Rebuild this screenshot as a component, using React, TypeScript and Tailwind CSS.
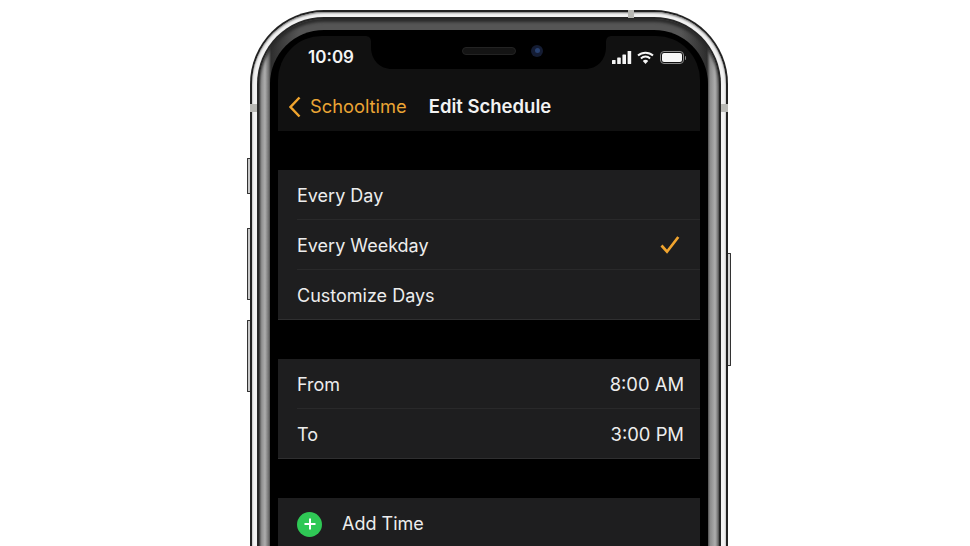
function Row({ label, value, check, last }: { label: string; value?: string; check?: boolean; last?: boolean }) {
  return (
    <div className="pl-[19px]">
      <div className={`flex items-center justify-between pr-[16px] pt-[1px] ${last ? "h-[49px]" : "h-[50px] border-b border-[#29292a]"}`}>
        <span className="text-[18px] leading-[27px] text-[#ededed]">{label}</span>
        {value && <span className="text-[18.4px] leading-[28px] text-[#ededed]">{value}</span>}
        {check && (
          <svg width="20" height="18" viewBox="0 0 20 18" fill="none" className="mr-[4px]">
            <path d="M1.5 9.5l5.5 6.2L18.3 1" stroke="#f0a42e" strokeWidth="2.7" />
          </svg>
        )}
      </div>
    </div>
  )
}

function StatusIcons() {
  return (
    <div className="flex items-center gap-[5px]">
      <svg width="20" height="13" viewBox="0 0 20 13" fill="#f5f5f5">
        <rect x="0" y="9" width="3.6" height="4" rx="0.6" />
        <rect x="5.2" y="6.4" width="3.6" height="6.6" rx="0.6" />
        <rect x="10.4" y="3.4" width="3.6" height="9.6" rx="0.6" />
        <rect x="15.6" y="0" width="3.6" height="13" rx="0.6" />
      </svg>
      <svg width="17" height="13" viewBox="0 0 17 13" fill="none" stroke="#f5f5f5" strokeWidth="2">
        <path d="M1 4.6C5.2.7 11.8.7 16 4.6" />
        <path d="M3.9 7.4C6.5 5 10.5 5 13.1 7.4" />
        <path d="M8.5 13l2.7-3.1a3.7 3.7 0 0 0-5.4 0z" fill="#f5f5f5" stroke="none" />
      </svg>
      <div className="ml-[1px] flex items-center">
        <div className="flex h-[13px] w-[24px] items-center rounded-[4px] border border-[#8a8a8a] p-[1px]">
          <div className="h-full w-full rounded-[2px] bg-[#f7f7f7]" />
        </div>
        <div className="ml-[1px] h-[4px] w-[1px] rounded-r-[1px] bg-[#8a8a8a]" />
      </div>
    </div>
  )
}

export default function App() {
  return (
    <div className="h-[546px] w-[970px] overflow-hidden bg-white font-['Inter','Liberation_Sans',sans-serif]">
      <div className="relative ml-[250px] mt-[10px] h-[620px] w-[478px]">
        {/* side buttons */}
        <div className="absolute left-[-3px] top-[148px] h-[36px] w-[3px] rounded-l-[1px] border-y border-l border-[#333] bg-[#c9c9c9]" />
        <div className="absolute left-[-3px] top-[218px] h-[72px] w-[3px] rounded-l-[1px] border-y border-l border-[#333] bg-[#c9c9c9]" />
        <div className="absolute left-[-3px] top-[310px] h-[72px] w-[3px] rounded-l-[1px] border-y border-l border-[#333] bg-[#c9c9c9]" />
        <div className="absolute right-[-3px] top-[243px] h-[113px] w-[3px] rounded-r-[1px] border-y border-r border-[#333] bg-[#d6d6d6]" />

        <div className="rounded-t-[74px] bg-[#222222] p-[2px] pb-0">
          <div className="rounded-t-[72px] bg-[#f2f2f2] p-[5px] pb-0 shadow-[inset_0_1px_2px_#777]">
            <div className="rounded-t-[67px] bg-[#262626] p-[2px] pb-0">
              <div className="rounded-t-[65px] bg-[linear-gradient(90deg,#444_0px,#8a8a8a_2px,#adadad_6px,#6a6a6a_10px,#2e2e2e_12px,#555_40px,#555_422px,#2e2e2e_448px,#8a8a8a_451px,#adadad_456px,#555_462px)] p-[11px] pb-0 shadow-[inset_0_3px_3px_#2a2a2a]">
                <div className="relative rounded-t-[54px] bg-black px-[8px] pt-[6px]">
                  <div className="h-[600px] overflow-hidden rounded-t-[44px] bg-black">
                    {/* status bar and navigation */}
                    <div className="bg-[#111111]">
                      <div className="flex h-[33px] items-start">
                        <div className="flex h-[33px] w-[93px] items-center justify-end pr-[17px] text-[17px] font-semibold leading-none text-[#f4f4f4]">
                          <span className="mt-[10px]">10:09</span>
                        </div>
                        <div className="relative flex h-[33px] w-[235px] items-center gap-[15px] pb-[4px] pl-[91px]">
                          <svg width="247" height="39" viewBox="0 0 247 39" className="absolute left-[-6px] top-[-6px]">
                            <path d="M0 0H247V6C243 6 241 8 241 12V17C241 30 232 39 220 39H27C15 39 6 30 6 17V12C6 8 4 6 0 6Z" fill="#000" />
                          </svg>
                          <div className="relative h-[8px] w-[54px] rounded-full border border-[#232323] bg-[#141414]" />
                          <div className="relative flex h-[12px] w-[12px] items-center justify-center rounded-full bg-[#141c33]">
                            <div className="h-[5px] w-[5px] rounded-full bg-[#27406f]" />
                          </div>
                        </div>
                        <div className="flex h-[33px] flex-1 items-center pl-[6px] pt-[10px]">
                          <StatusIcons />
                        </div>
                      </div>
                      <div className="flex h-[62px] items-center pl-[10px] pt-[13px]">
                        <svg width="13" height="22" viewBox="0 0 13 22" fill="none" stroke="#f0a42e" strokeWidth="2.5">
                          <path d="M11.5 1.5L2.5 11l9 9.5" />
                        </svg>
                        <span className="ml-[9px] text-[18.3px] text-[#eba535]">Schooltime</span>
                        <span className="ml-[22px] text-[18.5px] font-semibold text-[#f2f2f2]">Edit Schedule</span>
                      </div>
                    </div>

                    <div className="h-[39px]" />
                    <div className="border-b border-[#2f2f30] bg-[#1e1e1f]">
                      <Row label="Every Day" />
                      <Row label="Every Weekday" check />
                      <Row label="Customize Days" last />
                    </div>

                    <div className="h-[39px]" />
                    <div className="border-b border-[#2f2f30] bg-[#1e1e1f]">
                      <Row label="From" value="8:00 AM" />
                      <Row label="To" value="3:00 PM" last />
                    </div>

                    <div className="h-[39px]" />
                    <div className="bg-[#1e1e1f]">
                      <div className="flex h-[52px] items-center gap-[20px] pl-[19px]">
                        <div className="flex h-[25px] w-[25px] items-center justify-center rounded-full bg-[#2fc855]">
                          <svg width="12" height="12" viewBox="0 0 12 12" stroke="#fff" strokeWidth="2">
                            <path d="M6 .5v11M.5 6h11" />
                          </svg>
                        </div>
                        <span className="mt-[-2px] text-[18px] text-[#ededed]">Add Time</span>
                      </div>
                    </div>
                  </div>
                </div>
              </div>
            </div>
          </div>
        </div>

        {/* antenna bands */}
        <div className="absolute left-0 top-[94px] h-[8px] w-[7px] bg-[#b8b8b4]" />
        <div className="absolute right-0 top-[94px] h-[8px] w-[7px] bg-[#b8b8b4]" />
        <div className="absolute left-[378px] top-0 h-[8px] w-[6px] bg-[#b8b8b4]" />
      </div>
    </div>
  )
}
